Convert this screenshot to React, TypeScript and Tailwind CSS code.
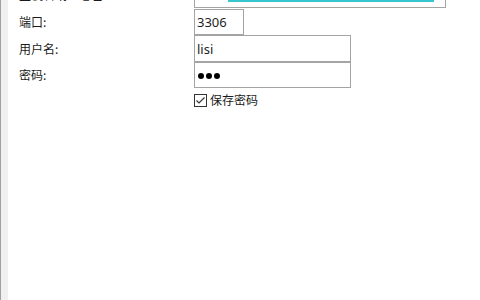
import React from "react";

const cjk = { fontFamily: '"Noto Sans CJK SC", "Noto Sans", sans-serif' };
const latin = { fontFamily: '"Noto Sans", "Noto Sans CJK SC", sans-serif' };

const Label = ({ text }: { text: string }) => (
  <div className="w-[175px] shrink-0 text-[12px] leading-[16px] text-[#1a1a1a]" style={cjk}>
    {text}
  </div>
);

const Box = ({ className, children }: { className: string; children?: React.ReactNode }) => (
  <div className={`flex items-center border border-[#a4a4a4] bg-white ${className}`}>{children}</div>
);

export default function App() {
  return (
    <div className="flex h-[300px] w-[480px] overflow-hidden bg-white">
      <div className="w-px bg-[#a0a0a0]" />
      <div className="w-[7px] bg-[#f0f0f0]" />
      <div className="flex-1 overflow-hidden">
        <div className="mt-[-18px] flex flex-col pl-[11px]">
          {/* host row, scrolled mostly out of view */}
          <div className="flex h-[26px] items-center">
            <Label text="主机名或IP地址:" />
            <Box className="h-[26px] w-[252px] items-start">
              <div className="ml-[33px] mt-px h-[18px] w-[206px] bg-[#35c6cf]" />
            </Box>
          </div>
          <div className="mt-px flex h-[26px] items-center">
            <Label text="端口:" />
            <Box className="h-[26px] w-[50px] pl-[2px]">
              <span className="text-[13px] leading-[18px] text-[#1e1e1e]" style={latin}>
                3306
              </span>
            </Box>
          </div>
          <div className="flex h-[27px] items-center">
            <Label text="用户名:" />
            <Box className="h-[27px] w-[157px] pl-[2px]">
              <span className="text-[13px] leading-[18px] text-[#1e1e1e]" style={latin}>
                lisi
              </span>
            </Box>
          </div>
          <div className="flex h-[26px] items-center">
            <Label text="密码:" />
            <Box className="h-[26px] w-[157px] gap-[2px] pl-[3px] pt-px">
              <span className="h-[6px] w-[6px] rounded-full bg-black" />
              <span className="h-[6px] w-[6px] rounded-full bg-black" />
              <span className="h-[6px] w-[6px] rounded-full bg-black" />
            </Box>
          </div>
          <div className="mt-[5px] flex items-center pl-[175px]">
            <svg width="13" height="13" viewBox="0 0 13 13" className="shrink-0">
              <rect x="0.5" y="0.5" width="12" height="12" fill="#fff" stroke="#333" />
              <path d="M2.5 6.5 L5 9 L10.5 3.5" fill="none" stroke="#333" strokeWidth="1.2" />
            </svg>
            <span className="ml-[3px] text-[12px] leading-[14px] text-[#1a1a1a]" style={cjk}>
              保存密码
            </span>
          </div>
        </div>
      </div>
    </div>
  );
}
